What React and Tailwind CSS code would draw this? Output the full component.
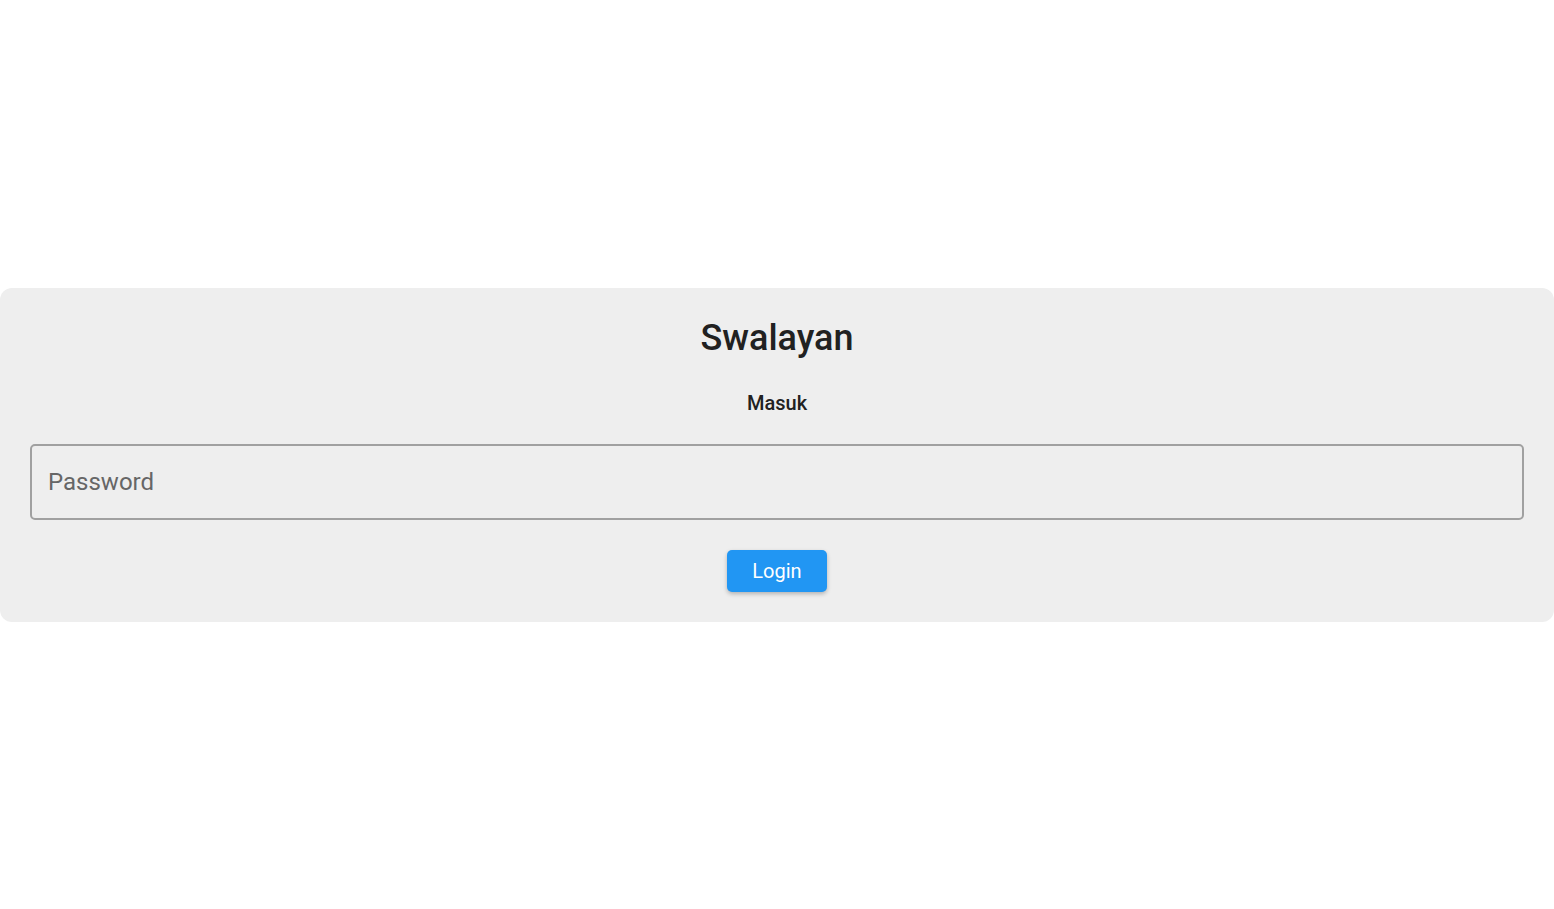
import React, { useState } from "react";

export default function App() {
  const [password, setPassword] = useState("");

  return (
    <div
      className="min-h-screen w-full bg-white flex items-center"
      style={{ fontFamily: "Roboto, 'Liberation Sans', sans-serif" }}
    >
      <div className="w-full bg-[#eeeeee] rounded-xl px-[30px] pt-[30px] pb-[30px] flex flex-col items-center">
        <h1 className="text-[36px] leading-[40px] font-medium text-[#212121]">Swalayan</h1>
        <h2 className="mt-[31px] text-[20px] leading-[28px] font-medium text-[#212121]">Masuk</h2>
        <input
          type="password"
          value={password}
          onChange={e => setPassword(e.target.value)}
          placeholder="Password"
          className="mt-[27px] w-full h-[76px] bg-transparent border-2 border-[#a0a0a0] rounded-[5px] px-4 text-[24px] text-[#212121] placeholder:text-[#666666] outline-none"
        />
        <button className="mt-[30px] w-[100px] h-[42px] bg-[#2196f3] text-white text-[20px] rounded-[5px] shadow-[0_2px_4px_rgba(0,0,0,0.25)]">
          Login
        </button>
      </div>
    </div>
  );
}
